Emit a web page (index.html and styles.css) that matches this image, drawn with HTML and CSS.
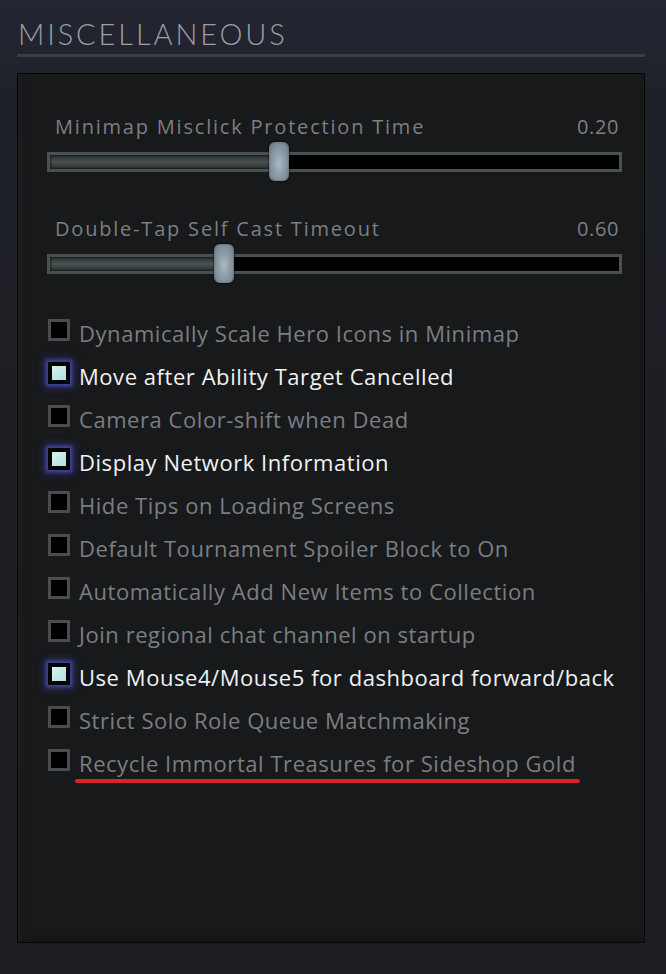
FILE: index.html
```html
<!DOCTYPE html>
<html>
<head>
<meta charset="utf-8">
<link rel="stylesheet" href="styles.css">
</head>
<body>
<div class="page">
  <h1 class="title">MISCELLANEOUS</h1>
  <div class="rule"></div>
  <div class="panel">
    <div class="slider">
      <div class="slider-head"><span>Minimap Misclick Protection Time</span><span>0.20</span></div>
      <div class="track">
        <div class="fill" style="width: 40.3%"></div>
        <div class="knob" style="left: 40.3%"></div>
      </div>
    </div>
    <div class="slider">
      <div class="slider-head"><span>Double-Tap Self Cast Timeout</span><span>0.60</span></div>
      <div class="track">
        <div class="fill" style="width: 30.6%"></div>
        <div class="knob" style="left: 30.6%"></div>
      </div>
    </div>
    <ul class="checks">
      <li class="check"><span class="box"></span><span class="label">Dynamically Scale Hero Icons in Minimap</span></li>
      <li class="check on"><span class="box"></span><span class="label">Move after Ability Target Cancelled</span></li>
      <li class="check"><span class="box"></span><span class="label">Camera Color-shift when Dead</span></li>
      <li class="check on"><span class="box"></span><span class="label">Display Network Information</span></li>
      <li class="check"><span class="box"></span><span class="label">Hide Tips on Loading Screens</span></li>
      <li class="check"><span class="box"></span><span class="label">Default Tournament Spoiler Block to On</span></li>
      <li class="check"><span class="box"></span><span class="label">Automatically Add New Items to Collection</span></li>
      <li class="check"><span class="box"></span><span class="label">Join regional chat channel on startup</span></li>
      <li class="check on"><span class="box"></span><span class="label">Use Mouse4/Mouse5 for dashboard forward/back</span></li>
      <li class="check"><span class="box"></span><span class="label">Strict Solo Role Queue Matchmaking</span></li>
      <li class="check marked"><span class="box"></span><span class="label">Recycle Immortal Treasures for Sideshop Gold</span></li>
    </ul>
  </div>
</div>
</body>
</html>
```
FILE: styles.css
```css
* { box-sizing: border-box; }
html, body {
  margin: 0;
  padding: 0;
}
body {
  width: 666px;
  height: 974px;
  overflow: hidden;
  background: linear-gradient(180deg, #232532 0px, #1e2027 120px, #1c1e22 974px);
  font-family: "Open Sans", "DejaVu Sans", sans-serif;
}
.page {
  padding: 16px 21px 0 17px;
}
.title {
  margin: 0 0 0 1px;
  height: 36px;
  font-family: "Lato", "Open Sans", sans-serif;
  font-weight: 300;
  font-size: 29px;
  line-height: 36px;
  letter-spacing: 2.9px;
  color: #9c9fa6;
}
.rule {
  height: 3px;
  margin-top: 2px;
  background: #3b3d44;
}
.panel {
  margin-top: 16px;
  height: 870px;
  background: #18191b;
  border: 1px solid #050506;
  box-shadow: inset 6px 0 6px -4px #202124, inset 0 -8px 6px -4px #151617;
  padding: 40px 22px 0 29px;
}
.slider {
  margin-bottom: 44px;
}
.slider:nth-child(2) {
  margin-bottom: 25px;
}
.slider-head {
  display: flex;
  justify-content: space-between;
  padding: 0 3px 0 8px;
  font-size: 20px;
  line-height: 26px;
  letter-spacing: 1.8px;
  color: #7c7f82;
}
.slider-head span:last-child {
  letter-spacing: 0.6px;
}
.track {
  position: relative;
  margin-top: 12px;
  height: 20px;
  background: #000;
  border: 3px solid #4a4f51;
}
.fill {
  height: 100%;
  background: linear-gradient(180deg, #2a3133 0%, #48524f 50%, #2b3234 100%);
  box-shadow: inset 0 0 3px #000;
}
.knob {
  position: absolute;
  top: -13px;
  width: 20px;
  height: 39px;
  margin-left: -10px;
  border-radius: 6px;
  background: radial-gradient(ellipse at 50% 55%, #aab9c3 0%, #8b9aa5 45%, #6c7983 100%);
  box-shadow: 0 0 2px #000, inset 0 0 2px #4d575d;
}
.checks {
  list-style: none;
  margin: 0;
  padding: 12px 0 0 1px;
}
.check {
  display: flex;
  align-items: center;
  height: 43px;
}
.box {
  flex: none;
  width: 22px;
  height: 22px;
  background: #000;
  border: 3px solid #4a4d4f;
  margin-right: 9px;
  margin-top: -5px;
}
.label {
  font-size: 22px;
  line-height: 28px;
  letter-spacing: 0.55px;
  color: #7b7e81;
  white-space: nowrap;
}
.check.on .box {
  border: 4px solid #030306;
  background: linear-gradient(135deg, #d6f2f2 0%, #b3dede 100%);
  box-shadow: 0 0 3px 2px #3f4699, 0 0 7px 4px #2b2f6a;
}
.check.on .label {
  color: #f1f2f2;
}
.check.marked .label {
  position: relative;
}
.check.marked .label::after {
  content: "";
  position: absolute;
  left: -4px;
  right: -4px;
  bottom: -6px;
  height: 4px;
  border-radius: 2px;
  background: #d8232a;
}
```
